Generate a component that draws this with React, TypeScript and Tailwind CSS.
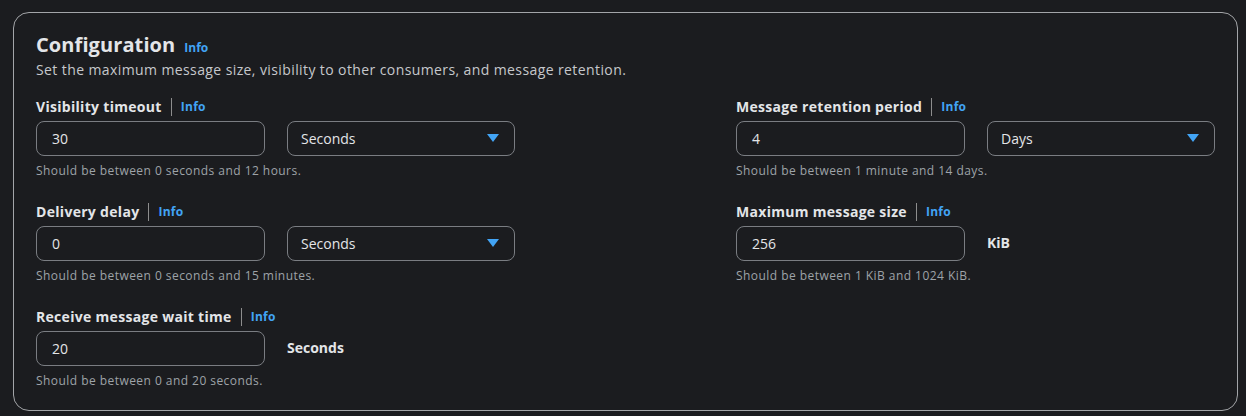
import React from "react";

const font = { fontFamily: '"Open Sans", "Noto Sans", sans-serif' };

function Label({ text }: { text: string }) {
  return (
    <div className="flex items-center h-[22px] text-[14px] leading-[22px] tracking-[0.3px]">
      <span className="font-bold text-[#e3e5e8]">{text}</span>
      <span className="ml-[9px] mr-[9px] h-[18px] w-px bg-[#8d8d8d]" />
      <span className="font-bold text-[12px] text-[#42a4f5]">Info</span>
    </div>
  );
}

function Input({ value }: { value: string }) {
  return (
    <div className="w-[229px] h-[35px] rounded-[8px] border border-[#7a7d82] flex items-center px-[15px] text-[14px] text-[#e3e5e8]">
      {value}
    </div>
  );
}

function Select({ value }: { value: string }) {
  return (
    <div className="w-[228px] h-[35px] rounded-[8px] border border-[#7a7d82] flex items-center justify-between pl-[13px] pr-[15px] text-[14px] text-[#e3e5e8]">
      <span>{value}</span>
      <svg width="12" height="9" viewBox="0 0 12 9">
        <path d="M0 0 H12 L6 8 Z" fill="#42a4f5" />
      </svg>
    </div>
  );
}

function Hint({ text }: { text: string }) {
  return (
    <div className="mt-[7px] text-[12px] leading-[16px] tracking-[0.45px] text-[#9ea3a8]">{text}</div>
  );
}

function Field({
  label,
  value,
  select,
  unit,
  hint,
}: {
  label: string;
  value: string;
  select?: string;
  unit?: string;
  hint: string;
}) {
  return (
    <div className="flex flex-col">
      <Label text={label} />
      <div className="mt-[3px] flex items-center gap-[22px]">
        <Input value={value} />
        {select && <Select value={select} />}
        {unit && <span className="font-bold text-[14px] text-[#e3e5e8] -mt-[3px]">{unit}</span>}
      </div>
      <Hint text={hint} />
    </div>
  );
}

export default function App() {
  return (
    <div className="w-[1246px] h-[416px] bg-[#1b1c1f] pt-[12px] pl-[13px]" style={font}>
      <div className="w-[1225px] h-[399px] rounded-[16px] border border-[#a3a5a8] bg-[#1b1c1f] pl-[22px] pr-[22px] pt-[17px]">
        <div className="flex items-baseline gap-[9px]">
          <span className="text-[20px] font-bold text-[#e3e5e8] leading-[30px] tracking-[0.1px]">Configuration</span>
          <span className="text-[12px] font-bold text-[#42a4f5]">Info</span>
        </div>
        <div className="text-[14px] leading-[20px] tracking-[0.4px] text-[#c6c8cc]">
          Set the maximum message size, visibility to other consumers, and message retention.
        </div>
        <div className="mt-[16px] flex justify-between">
          <div className="flex flex-col gap-[22px]">
            <Field label="Visibility timeout" value="30" select="Seconds" hint="Should be between 0 seconds and 12 hours." />
            <Field label="Delivery delay" value="0" select="Seconds" hint="Should be between 0 seconds and 15 minutes." />
            <Field label="Receive message wait time" value="20" unit="Seconds" hint="Should be between 0 and 20 seconds." />
          </div>
          <div className="flex flex-col gap-[22px] w-[479px]">
            <Field label="Message retention period" value="4" select="Days" hint="Should be between 1 minute and 14 days." />
            <Field label="Maximum message size" value="256" unit="KiB" hint="Should be between 1 KiB and 1024 KiB." />
          </div>
        </div>
      </div>
    </div>
  );
}
